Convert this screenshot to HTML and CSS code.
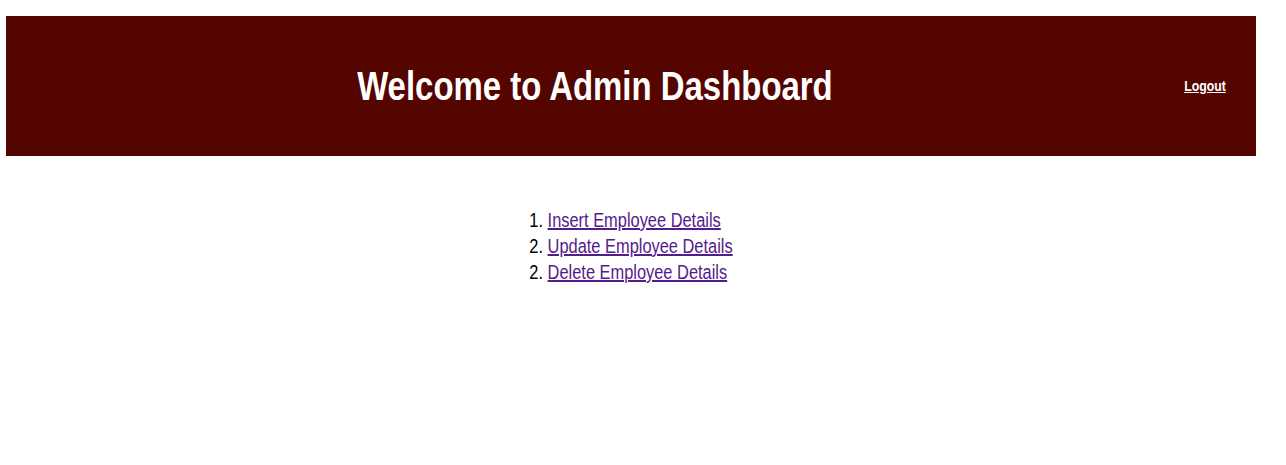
FILE: index.html
```html
<!DOCTYPE html>
<html lang="en">
<head>
<meta charset="utf-8">
<title>Admin Dashboard</title>
<link rel="stylesheet" href="styles.css">
</head>
<body>
<header class="topbar">
  <h1 class="title"><span class="narrow">Welcome to Admin Dashboard</span></h1>
  <a class="logout" href="#">Logout</a>
</header>
<main class="menu">
  <ol class="menu-list">
    <li><a class="menu-link" href="#">Insert Employee Details</a></li>
    <li><a class="menu-link" href="#">Update Employee Details</a></li>
    <li value="2"><a class="menu-link" href="#">Delete Employee Details</a></li>
  </ol>
</main>
</body>
</html>
```
FILE: styles.css
```css
html, body {
  background: #ffffff;
}
body {
  margin: 16px 30px 0 6px;
  font-family: "Liberation Sans Narrow", "Liberation Sans", Arial, sans-serif;
}
.topbar {
  display: flex;
  align-items: center;
  height: 140px;
  background: #540500;
  padding-right: 30px;
}
.title {
  flex: 1;
  margin: 0;
  padding-left: 8px;
  text-align: center;
  color: #ffffff;
  font-size: 40px;
  font-weight: bold;
}
.narrow {
  display: inline-block;
  transform: scaleX(0.823);
  transform-origin: center;
}
.logout {
  display: inline-block;
  margin-bottom: 2px;
  color: #ffffff;
  font-size: 15px;
  font-weight: bold;
  text-decoration: underline;
  transform: scaleX(0.82);
  transform-origin: right center;
}
.menu {
  display: flex;
  justify-content: center;
  padding-top: 51px;
  padding-left: 2px;
}
.menu-list {
  margin: 0;
  padding-left: 19px;
  font-size: 20px;
  line-height: 26px;
  color: #000000;
  transform: scaleX(0.82);
  transform-origin: center top;
}
.menu-link {
  color: #551a8b;
  text-decoration: underline;
}
```
